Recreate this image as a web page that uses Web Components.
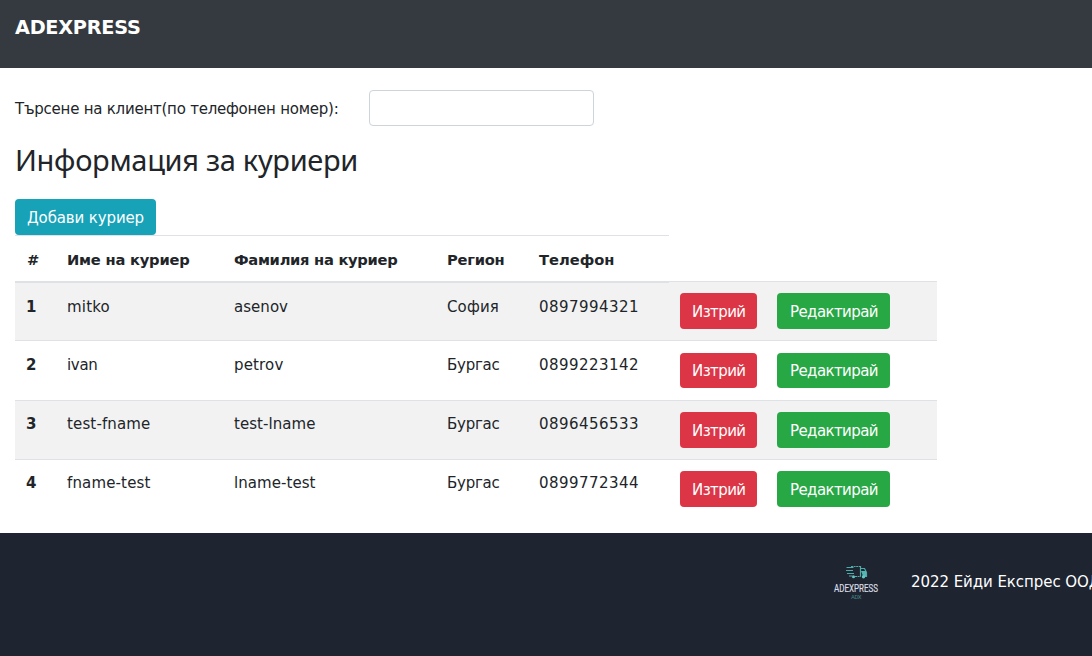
<!DOCTYPE html>
<html lang="bg"><head><meta charset="utf-8"><title>ADEXPRESS</title>
<style>
html,body{margin:0;height:100%}
body{font:15px/22px "DejaVu Sans",Verdana,sans-serif;color:#212529;background:#fff;overflow:hidden}
</style></head><body>
<adx-app></adx-app>
<script>
const define=(name,html,init)=>customElements.define(name,class extends HTMLElement{
  connectedCallback(){
    if(this.shadowRoot)return;
    const t=document.createElement('template');t.innerHTML=html;
    this.attachShadow({mode:'open'}).append(t.content.cloneNode(true));
    if(init)init.call(this,this.shadowRoot);
  }
});
// Text run whose tracking is adjusted so its advance equals the "w" attribute.
define('adx-text','<style>:host{display:inline-block;white-space:pre;vertical-align:top}span{display:inline-block;vertical-align:top}</style><span><slot></slot></span>',function(r){
  const s=r.querySelector('span'),w=+this.getAttribute('w'),n=this.textContent.length;
  if(w){const d=(w-s.getBoundingClientRect().width)/n;s.style.letterSpacing=d.toFixed(3)+'px'}
});
define('adx-header','<style>:host{display:block;box-sizing:border-box;height:68px;padding:13px 15px;background:#343a40;color:#fff;font-size:19.3px;line-height:30px;font-weight:700}</style><slot></slot>');
define('adx-search','<style>:host{display:flex;align-items:center;height:36px;padding:22px 15px 0}label{width:354px;padding-top:2px}input{box-sizing:border-box;width:225px;height:36px;margin:0;padding:6px 12px;border:1px solid #ced4da;border-radius:4px;background:#fff;font:inherit;outline:0}</style><label for="q"><slot></slot></label><input id="q" type="text">');
define('adx-button','<style>:host{display:inline-flex;align-items:center;box-sizing:border-box;height:36px;padding:2px 12px 0;border-radius:4px;color:#fff;background:#17a2b8}:host([kind=danger]){background:#dc3545;width:77px}:host([kind=success]){background:#28a745;width:113px;padding-left:13px}</style><slot></slot>');
define('adx-row',`<style>
:host{display:grid;grid-template-columns:40px 167px 213px 92px 141px 97px 172px;width:922px;height:59px;box-sizing:border-box;border-top:1px solid #dee2e6}
:host([striped]){background:#f2f2f2}
:host([head]){position:relative;width:654px;grid-template-columns:40px 167px 213px 92px 142px;height:48px;border-bottom:2px solid #dee2e6;font-weight:700;font-size:14.7px}
::slotted(div){padding:var(--text-top,13px) 0 0 12px}
::slotted(adx-button){margin:11px 0 0 12px;align-self:start}
</style><slot></slot>`);
define('adx-logo',`<style>:host{display:block;width:50px;height:40px;margin-right:-4px}svg{display:block}</style>
<svg width="50" height="40" viewBox="0 0 50 40" fill="none">
<g stroke="#50aaa9" stroke-width="1.2"><path d="M13.500 5.500h7M13 8.500h7M14 11.500h7M16 14h3.500"/><path d="M18 4.500h9" stroke-dasharray="2 .6"/><path d="M22 14.500h6" stroke-dasharray="2 .6"/><path d="M27.500 4v10M28 6.500h3.500l2 4v4h-3"/></g>
<path d="M28 9h5v5h-3z" fill="#55b5b3"/><circle cx="20.500" cy="14.700" r="1.500" fill="#62c7c3"/><circle cx="30.500" cy="14.700" r="1.700" fill="#62c7c3"/>
<text x="1" y="30" font-family="Roboto,sans-serif" font-size="11" fill="#dadde1" stroke="#dadde1" stroke-width=".2" textLength="44" lengthAdjust="spacingAndGlyphs">ADEXPRESS</text>
<text x="18" y="37" font-family="Roboto,sans-serif" font-size="6" fill="#438487" textLength="10.500">ADX</text></svg>`);
define('adx-footer','<style>:host{display:flex;box-sizing:border-box;height:123px;padding:29px 0 0 833px;gap:32px;background:#1e2430;color:#fff;overflow:hidden;white-space:nowrap}::slotted(adx-text){margin-top:9px}</style><adx-logo></adx-logo><slot></slot>');
define('adx-app',`<style>
:host{display:block}
h2{margin:15px 15px 21px;height:37px;font:400 29px/37px "Noto Sans","Open Sans",sans-serif}
.bar{display:flex;padding-left:15px}
.table{padding-left:15px;height:298px}
</style>
<adx-header><adx-text w="125.5">ADEXPRESS</adx-text></adx-header>
<adx-search><adx-text w="323.500">Търсене на клиент(по телефонен номер):</adx-text></adx-search>
<h2><adx-text w="343">Информация за куриери</adx-text></h2>
<div class="bar"><adx-button><adx-text w="117">Добави куриер</adx-text></adx-button></div>
<div class="table"></div>
<adx-footer><adx-text w="189.5">2022 Ейди Експрес ООД</adx-text></adx-footer>`,function(r){
  const T=(s,w)=>`<adx-text w="${w}">${s}</adx-text>`;
  const P=(s,w)=>`<div>${T(s,w)}</div>`;
  const B=T('Изтрий',53.5),E=T('Редактирай',88);
  const rows=[
    [['1',10],['mitko',43],['asenov',54],['София',52],['0897994321',100]],
    [['2',10],['ivan',30.5],['petrov',49.5],['Бургас',52.5],['0899223142',100]],
    [['3',10],['test-fname',83.5],['test-lname',81.5],['Бургас',52.5],['0896456533',100]],
    [['4',10],['fname-test',83.5],['lname-test',81.5],['Бургас',52.5],['0899772344',100]]];
  const h=[['#',13],['Име на куриер',122.5],['Фамилия на куриер',163.5],['Регион',57.5],['Телефон',75.5]];
  const heights=[59,60,59,73],tops=[14,13,12,12];
  const button=(kind,text,i)=>`<adx-button kind="${kind}"${i===1?' style="height:35px;margin-top:12px;padding-top:0"':''}>${text}</adx-button>`;
  r.querySelector('.table').innerHTML=
    `<adx-row head>${h.map(c=>P(...c)).join('')}</adx-row>`+
    rows.map((x,i)=>`<adx-row ${i%2?'':'striped'} style="--text-top:${tops[i]}px;height:${heights[i]}px${i?'':';margin-top:-2px'}">${x.map((c,j)=>j?P(...c):`<div style="font-weight:700;padding-left:11px">${T(...c)}</div>`).join('')}${button('danger',B,i)}${button('success',E,i)}</adx-row>`).join('');
});
</script></body></html>
